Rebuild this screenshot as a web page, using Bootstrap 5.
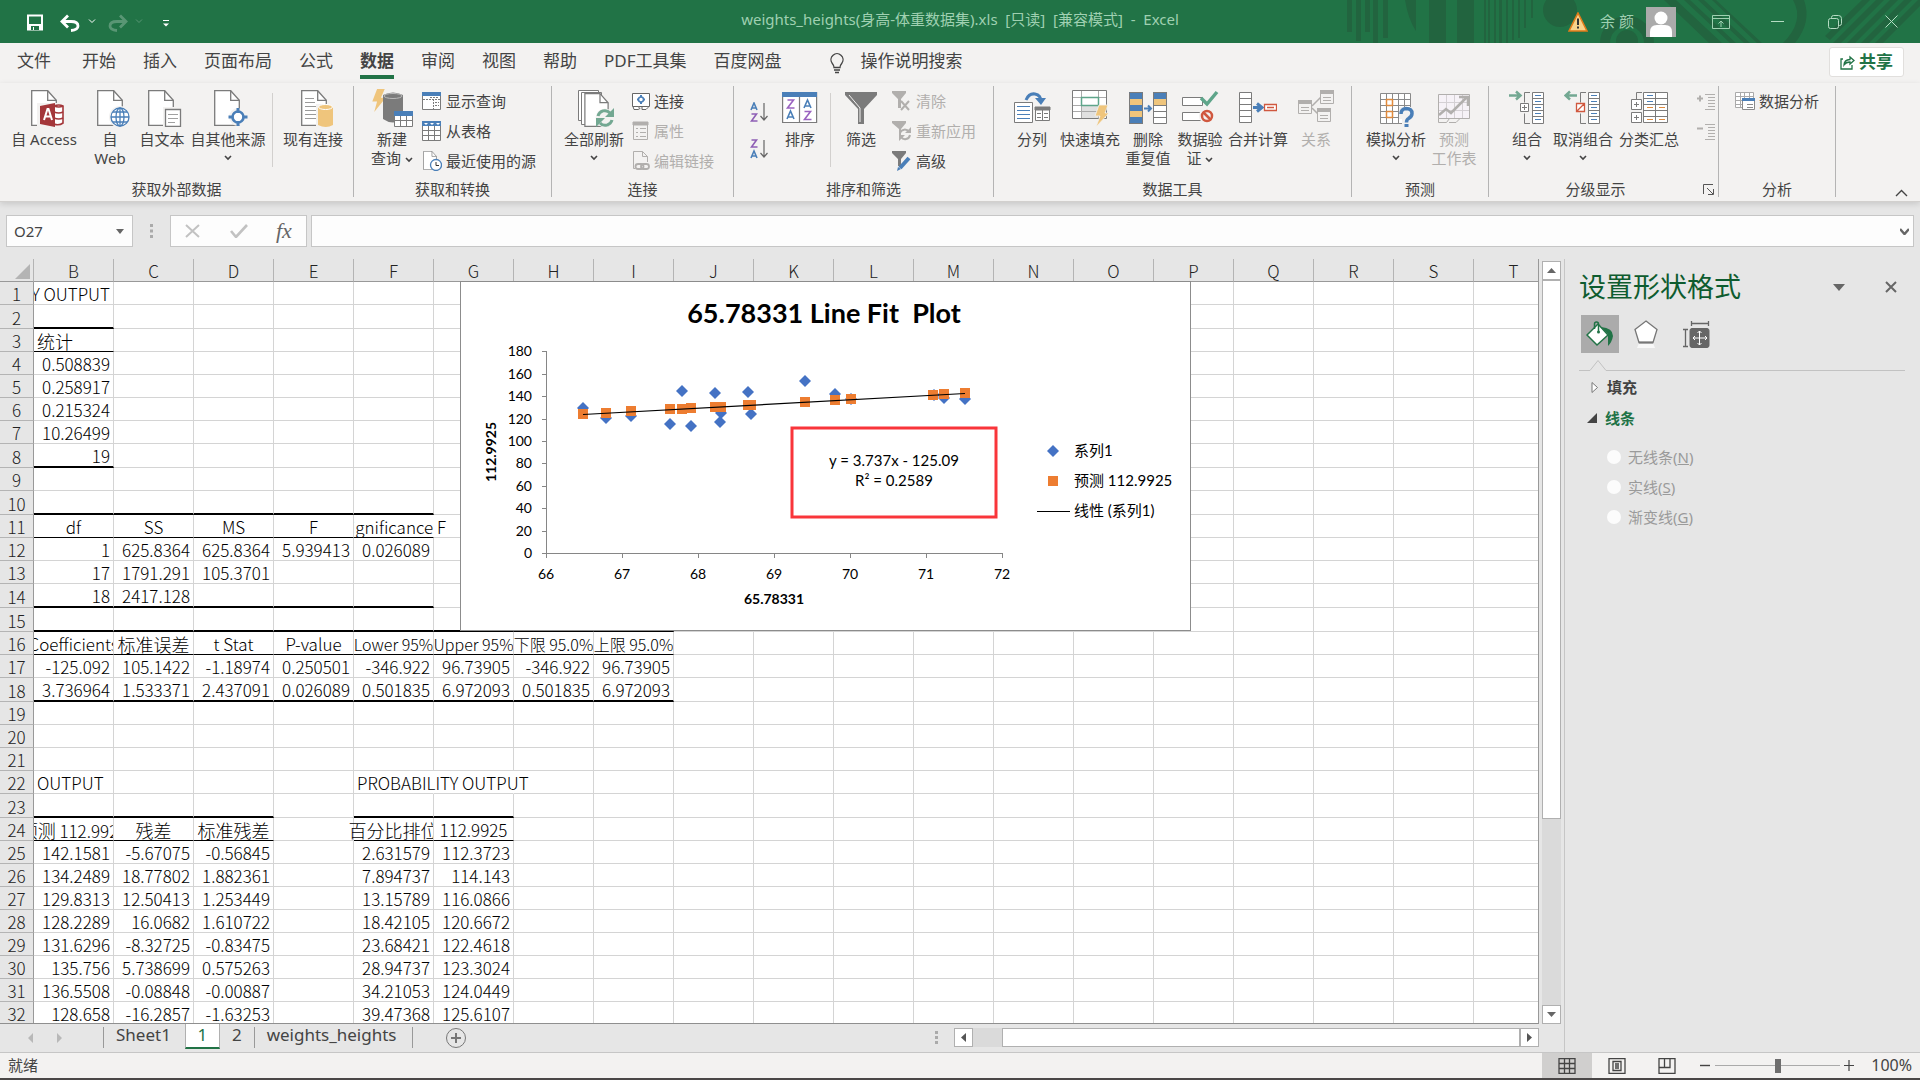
<!DOCTYPE html>
<html lang="zh-CN">
<head>
<meta charset="utf-8">
<meta name="viewport" content="width=device-width, initial-scale=1">
<title>weights_heights - Excel</title>
<link href="https://cdn.jsdelivr.net/npm/bootstrap@5.3.0/dist/css/bootstrap.min.css" rel="stylesheet">
<style>
:root{--xl-green:#217346;--xl-bg:#e6e6e6;--xl-ribbon:#f3f2f1;--xl-line:#b4b4b4;--xl-text:#444}
body{font-family:"Noto Sans","Noto Sans CJK SC",sans-serif;font-size:15px;line-height:19px;color:var(--xl-text);background:var(--xl-bg)}
button{font:inherit;color:inherit;background:none;border:0;padding:0}
svg{display:block;flex:none}
.titlebar,.tabs,.ribbon,.fbar,.status,.stabs,.pane,.vscroll{flex:none}
/* title bar */
.titlebar{height:43px;background:var(--xl-green);color:#9fd0b1;position:relative}
.titlebar .deco{position:absolute;right:0;top:0}
.titlebar .title-side{flex:1 1 0;position:relative}
.titlebar h1{font-size:15px;line-height:19px;font-weight:400;white-space:pre;margin:0;padding-bottom:5px}
.win-btn{width:57px;height:43px;display:flex;align-items:center;justify-content:center}
/* tabs */
.tabs{height:40px;background:var(--xl-ribbon);font-size:17px;line-height:24px}
.tabs a{color:var(--xl-text);text-decoration:none;padding-top:6px;height:36px;border-bottom:4px solid transparent;white-space:nowrap}
.tabs a.on{font-weight:700;border-color:var(--xl-green)}
.tab-list{gap:27px;padding-left:17px}
.share{height:30px;width:75px;background:#fff;border:1px solid #e1dfdd;border-radius:3px;color:var(--xl-green);font-weight:700;font-size:17px;margin:4px 16px 0 0}
/* ribbon */
.ribbon{height:119px;background:var(--xl-ribbon);border-bottom:1px solid #d2d0ce;box-shadow:0 2px 6px #0002;padding-top:3px;position:relative}
.grp{display:flex;flex-direction:column;height:111px;border-right:1px solid var(--xl-line)}
.grp-body{display:flex;flex:1;min-height:0}
.grp-name{text-align:center;line-height:19px;height:19px;margin-bottom:-2px;position:relative}
.g-external{width:354px}.g-transform{width:198px}.g-connect{width:182px}.g-sort{width:260px}
.g-tools{width:358px}.g-forecast{width:137px}.g-outline{width:230px}.g-analysis{width:117px}
.big{display:flex;flex-direction:column;align-items:center;padding-top:3px;white-space:nowrap;height:84px}
.big svg.ico{margin-bottom:3px}
.big .chev{margin-top:6px}
.off{color:#b1afad}
.rows{display:flex;flex-direction:column}
.rows button{height:30px;display:flex;align-items:center;gap:4px;white-space:nowrap}
.split{width:1px;height:74px;background:#d2d0ce;margin-top:7px}
.w52{width:52px}.w60{width:60px}.w64{width:64px}.w80{width:80px}
.launcher{position:absolute;right:4px;top:4px}
/* formula bar */
.fbar{padding:13px 6px 0;height:57px}
.fbox{height:32px;background:#fdfdfd;border:1px solid #c6c6c6}
.fbox input{border:0;background:none;outline:0;width:100%;padding:0 7px;color:#444}
.name-box{width:127px}.fx-box{width:137px}
.fx{font:italic 22px/28px "Liberation Serif",serif;color:#666}
/* grid */
.sheet{flex:1;min-width:0;overflow:hidden;position:relative;border-right:1px solid #999;border-bottom:1px solid #8f8f8f}
.cells{table-layout:fixed;width:1554px;border-collapse:separate;border-spacing:0;font-family:"Noto Sans CJK SC",sans-serif;font-size:17px;font-weight:300;color:#000;line-height:20px;background:#fff}
.cells th,.cells td{padding:0;border:0 solid #d4d4d4;border-width:0 1px 1px 0;height:23px}
.cells .tall th,.cells .tall td{height:24px}
.cells th{background:var(--xl-bg);font-weight:300;text-align:center;color:#222;border-color:#b4b4b4;padding-top:2px}
.cells thead th{border-bottom-color:#999}
.cells tbody th{border-right-color:#999}
.cells div{height:22px;padding:2px 3px 0;white-space:nowrap;overflow-x:clip;overflow-y:visible;display:flex;justify-content:flex-end}
.cells .c{justify-content:center;padding:2px 0 0}
.cells .l{justify-content:flex-start}
.cells .zh{font-size:18px}
.cells .narrow,.cells .narrow .zh{font-size:16px}
.cells .spill{overflow:visible;position:relative}
.cells .cut-left{clip-path:inset(0 -60px 0 0)}
.cells .cut-right{clip-path:inset(0 0 0 -8px)}
.cells .nr{border-right-color:transparent}
.cells .thick{border-bottom:2px solid #000}
.cells .thin{border-bottom:1px solid #000}
.cells .corner{width:15px;height:15px;background:#b4b4b4;clip-path:polygon(100% 0,100% 100%,0 100%);margin:1px 3px 0 auto}
.plot{position:absolute;left:460px;top:22px;background:#fff}
.plot text{font-family:Lato,"Noto Sans CJK SC",sans-serif;font-size:14px;fill:#000}
.plot .lg{font-size:15px}
.plot .ttl{font-size:27px;white-space:pre}
/* scroll bars */
.sbtn{width:19px;height:19px;background:#fff;border:1px solid #b0b0b0;display:flex;align-items:center;justify-content:center;flex:none}
.vscroll{width:19px;margin:2px 3px 0 3px;background:#dadada}
.vthumb{height:539px;background:#fff;border:1px solid #b0b0b0}
.hscroll{width:585px;height:19px;background:#dadada;margin-right:25px}
.hthumb{flex:1;margin-left:29px;background:#fff;border:1px solid #b0b0b0}
/* sheet tabs */
.stabs{height:28px;font-size:17px;line-height:22px}
.stabs a{color:#444;text-decoration:none;height:25px}
.stabs a.on{background:#fff;color:var(--xl-green);border:1px solid #b0b0b0;border-top:0;border-bottom:2px solid var(--xl-green);width:35px;text-align:center;margin-left:2px}
.vbar{width:1px;height:21px;background:#999;margin-top:3px}
/* pane */
.pane{width:356px;border-left:1px solid #c6c6c6;padding:4px 15px 0 14px}
.pane h2{font-size:27px;line-height:40px;font-weight:400;color:#0e5c2f;margin:0}
.pane-tabs{padding:0 0 4px 2px}
.pane-tab{width:38px;height:38px;display:flex;align-items:center;justify-content:center}
.pane-tab.on{background:#ababab}
.pane label{color:#9a9a9a}
.pane input{appearance:none;width:14px;height:14px;border-radius:50%;background:#fcfcfc;margin:0 7px 0 0}
.opt{display:flex;align-items:center;height:30px}
.open-head{color:var(--xl-green);height:32px}
/* status */
.status{height:28px;background:var(--xl-ribbon);border-top:1px solid #c6c6c6;border-bottom:2px solid #4a4747}
.view{width:50px;height:25px;display:flex;align-items:center;justify-content:center}
.view.on{background:#d0cfce}
.zoomer{appearance:none;width:125px;height:16px;background:linear-gradient(#aaa,#aaa) center/100% 1px no-repeat}
.zoomer::-webkit-slider-thumb{appearance:none;width:6px;height:14px;background:#6e6e6e}
.pct{font-size:16px}
</style>
<script src="https://cdn.jsdelivr.net/npm/bootstrap@5.3.0/dist/js/bootstrap.bundle.min.js"></script>
</head>
<body class="vh-100 d-flex flex-column overflow-hidden">
<svg width="0" height="0" class="position-absolute">
<defs>
<symbol id="chev" viewBox="0 0 8 6"><path d="M1 1l3 3 3-3" fill="none" stroke="#444" stroke-width="1.6"/></symbol>
<symbol id="page" viewBox="0 0 26 36"><path d="M.7.7h16l8.6 9.600v25H.7z" fill="#fff" stroke="#7b7b7b" stroke-width="1.3"/><path d="M16.700.7v9.600h8.600" fill="none" stroke="#7b7b7b" stroke-width="1.3"/></symbol>
<symbol id="bolt" viewBox="0 0 14 24"><path d="M5 0h8L9 9h5L2 24l3-11H0z" fill="#efc57c"/></symbol>
</defs></svg>

<header class="titlebar d-flex align-items-center">
  <svg class="deco" width="580" height="43" viewBox="1340 0 580 43" fill="#22643f">
    <path d="M1347 0h5v32h-5zM1356 0h5v41h-5zM1365 0h5v32h-5zM1373 0h5v43h-5zM1383 0h5v38h-5zM1405 0h11v31q-8-12-11-31zM1429 0h17v43h-17zM1457 0h17v43h-17zM1484 0h2v43h-2zM1488 0h2v43h-2zM1494 0h2v43h-2zM1499 0h3v43h-3zM1506 0h2v43h-2zM1512 0h2v40h-2zM1518 0h2v38h-2zM1524 0h2v28h-2zM1531 0h2v18h-2z"/>
    <circle cx="1560" cy="10" r="17"/><circle cx="1627" cy="43" r="22" fill="none" stroke="#22643f" stroke-width="10"/><circle cx="1627" cy="41" r="11"/>
    <path d="M1664 0h12l46 43h-13zM1684 0h6l46 43h-6zM1698 0h6l46 43h-6zM1712 0h4l46 43h-5z"/>
    <path d="M1804 0q8 22-9 43h-12q22-22 10-43z"/>
    <path d="M1862 0h8l-40 40-5-4zM1876 0h8l-43 43h-8zM1890 0h8l-43 43h-8zM1904 0h8l-43 43h-8zM1918 0h2v6l-37 37h-8z"/>
  </svg>
  <div class="title-side d-flex align-items-center">
    <svg width="200" height="43" viewBox="0 0 200 43" fill="none" stroke="#fff">
      <path d="M28 15.500h14v14H28z" stroke-width="2"/><path d="M28 24h14v6H28z" fill="#fff" stroke="none"/><path d="M31 26h8v4h-5v-3h-1v3h-2z" fill="#217346" stroke="none"/>
      <path d="M68 15.500l-6 6 6 6M63 21.500h8q7 0 7 4.500 0 4-7 4.500" stroke-width="2.800"/><path d="M89 19.500l3 3 3-3"/>
      <g opacity=".25"><path d="M120 15.500l6 6-6 6M125 21.500h-8q-7 0-7 4.500 0 4 7 4.500" stroke-width="2.800"/><path d="M136 19.500l3 3 3-3"/></g>
      <path d="M163 20.500h6"/><path d="M163 23.500h6l-3 3z" fill="#fff" stroke="none"/>
    </svg>
  </div>
  <h1>weights_heights(身高-体重数据集).xls  [只读]  [兼容模式]  -  Excel</h1>
  <div class="title-side d-flex align-items-center justify-content-end">
    <svg width="20" height="20" viewBox="0 0 20 20"><path d="M10 1l9 18H1z" fill="#f8d28a" stroke="#e07b1a" stroke-width="1.600"/><path d="M9 6.500h2v6.500H9zM9 14.500h2v2H9z" fill="#333"/></svg>
    <span class="ms-2 ps-1 me-2 pe-1">余 颜</span>
    <svg width="30" height="30" viewBox="0 0 30 30"><path fill="#ababab" d="M0 0h30v30H0z"/><circle cx="15" cy="11" r="6.500" fill="#fff"/><path d="M4 30v-5q0-7 7-7h8q7 0 7 7v5z" fill="#fff"/></svg>
    <button class="win-btn ms-3" aria-label="功能区显示选项"><svg width="18" height="14" fill="none" stroke="#9fd0b1"><path d="M.5.5h17v13H.5zM.5 3.500h17M9 12V6M6.500 8.500L9 6l2.500 2.500"/></svg></button>
    <button class="win-btn" aria-label="最小化"><svg width="13" height="13"><path d="M0 6.500h13" stroke="#b5dcc3"/></svg></button>
    <button class="win-btn" aria-label="还原"><svg width="14" height="14" fill="none" stroke="#b5dcc3"><rect x=".5" y="3.500" width="10" height="10" rx="2"/><path d="M3.500 3.500V2.500q0-2 2-2h5q3 0 3 3v5q0 2-2 2h-1"/></svg></button>
    <button class="win-btn" aria-label="关闭"><svg width="13" height="13"><path d="M.5.5l12 12m0-12l-12 12" stroke="#b5dcc3"/></svg></button>
  </div>
</header>

<nav class="tabs d-flex">
  <div class="tab-list d-flex flex-grow-1">
    <a href="#" class="me-1">文件</a><a href="#">开始</a><a href="#">插入</a><a href="#">页面布局</a><a href="#">公式</a><a href="#" class="on">数据</a><a href="#">审阅</a><a href="#">视图</a><a href="#">帮助</a><a href="#">PDF工具集</a><a href="#">百度网盘</a>
    <a href="#" class="d-flex gap-3 ms-3 ps-1"><svg width="16" height="21" viewBox="0 0 16 21" fill="none" stroke="#444" stroke-width="1.300" class="mt-1"><path d="M5 14.500q0-2-2-4.500a6 6 0 1 1 10 0q-2 2.500-2 4.500zM5 17h6M6 19.500h4"/></svg>操作说明搜索</a>
  </div>
  <button class="share d-flex align-items-center justify-content-center gap-1"><svg width="15" height="15" viewBox="0 0 15 15" fill="none" stroke="#217346" stroke-width="1.300"><path d="M3 4H1v10h11v-4M4 10q0-5 6-5.500V2l4 3.500L10 9V7q-4 0-6 3z"/></svg>共享</button>
</nav>

<section class="ribbon d-flex">
  <div class="grp g-external"><div class="grp-body ps-1">
    <button class="big w80"><svg class="ico" width="40" height="38" viewBox="0 0 40 38"><use href="#page" x="7" y="1" width="26" height="36"/><path fill="#f3f2f1" d="M13 14h27v24H13z"/><path d="M30 17q5-2 9 0v17q-4 3-9 1z" fill="#fff" stroke="#a4373a" stroke-width="1.600"/><path d="M30 23q5 2 9 0M30 29q5 2 9 0M30 17q5 2 9 0" fill="none" stroke="#a4373a" stroke-width="1.600"/><path d="M16 17l15-3v24l-15-3z" fill="#a4373a"/><path d="M20 31l3.500-11h1L28 31M21.500 27.500h5" fill="none" stroke="#fff" stroke-width="2"/></svg>自 Access</button>
    <button class="big w52"><svg class="ico" width="40" height="38" viewBox="0 0 40 38"><use href="#page" x="7" y="1" width="26" height="36"/><circle cx="30" cy="28" r="11" fill="#f3f2f1"/><g fill="none" stroke="#4a7fb8" stroke-width="1.300"><circle cx="30" cy="28" r="9" fill="#fff"/><ellipse cx="30" cy="28" rx="4" ry="9"/><path d="M30 19v18M21 28h18M23 23h14M23 33h14"/></g></svg>自<br>Web</button>
    <button class="big w52"><svg class="ico" width="40" height="38" viewBox="0 0 40 38"><use href="#page" x="6" y="1" width="26" height="36"/><path fill="#f3f2f1" d="M21 18h18v20H21z"/><path fill="#fff" stroke="#7b7b7b" stroke-width="1.300" d="M23.500 20.500h15v17h-15z"/><path stroke="#a0a0a0" d="M26 25.500h10M26 29.500h10M26 33.500h7"/></svg>自文本</button>
    <button class="big w80"><svg class="ico" width="40" height="38" viewBox="0 0 40 38"><use href="#page" x="6" y="1" width="26" height="36"/><circle cx="30" cy="28" r="9" fill="#f3f2f1"/><circle cx="30" cy="28" r="5.500" fill="#fff" stroke="#4a7fb8" stroke-width="2.600"/><path stroke="#4a7fb8" stroke-width="3" d="M30 19v5M30 32v5M20.500 28h5M34.500 28h5"/></svg>自其他来源<svg class="chev" width="8" height="6"><use href="#chev"/></svg></button>
    <div class="split ms-1"></div>
    <button class="big w80"><svg class="ico" width="40" height="38" viewBox="0 0 40 38"><use href="#page" x="8" y="1" width="26" height="36"/><path stroke="#9a9a9a" d="M12 9.500h9M12 13.500h10M12 17.500h16M12 21.500h12M12 25.500h12M12 29.500h12"/><path fill="#f3f2f1" d="M23 15h17v23H23z"/><path fill="#efc57c" d="M25 18q7-4 15 0v18q-7 4-15 0z"/><ellipse cx="32.500" cy="18" rx="7" ry="2.500" fill="#efc57c" stroke="#fff"/></svg>现有连接</button>
  </div><div class="grp-name">获取外部数据</div></div>

  <div class="grp g-transform"><div class="grp-body ps-2">
    <button class="big w60"><svg class="ico" width="42" height="38" viewBox="0 0 42 38"><use href="#bolt" x="1" y="0" width="14" height="23"/><path d="M12 6q10-5 20 0v24q-10 7-20 0z" fill="#7b7b7b"/><ellipse cx="22" cy="7" rx="9" ry="2.500" fill="none" stroke="#bbb"/><path fill="#fff" stroke="#7b7b7b" d="M23.500 23.500h18v14h-18z"/><path fill="#4a7fb8" d="M23 22h19v5H23z"/><path stroke="#7b7b7b" d="M24 31.500h18M29.500 27v10M35.500 27v10"/></svg>新建<span>查询 <svg class="d-inline-block" width="8" height="6"><use href="#chev"/></svg></span></button>
    <div class="rows">
      <button><svg width="20" height="20" fill="none" stroke="#7b7b7b"><path fill="#fff" d="M.5 1.500h18v17H.5z"/><path fill="#4a7fb8" stroke="none" d="M0 1h19v4H0z"/><path d="M1 8.500h17M11.500 8v10M13 11.500h4M13 14.500h4M8 6.500h9" stroke-dasharray="2 1"/></svg>显示查询</button>
      <button><svg width="20" height="20" fill="none" stroke="#7b7b7b"><path fill="#fff" d="M.5 1.500h18v18H.5z"/><path fill="#4a7fb8" stroke="none" d="M0 0h19v5H0z"/><path fill="#fff" stroke="none" d="M2 2h4L4 4zM8 2h4l-2 2zM14 2h4l-2 2z"/><path d="M1 9.500h17M1 14.500h17M6.500 5v14M12.500 5v14"/></svg>从表格</button>
      <button><svg width="20" height="20" viewBox="0 0 20 20"><use href="#page" x="1" y="0" width="14" height="19"/><circle cx="14" cy="14" r="5.500" fill="#fff" stroke="#4a7fb8" stroke-width="1.300"/><path d="M14 11v3.500h3" fill="none" stroke="#333"/></svg>最近使用的源</button>
    </div>
  </div><div class="grp-name">获取和转换</div></div>

  <div class="grp g-connect"><div class="grp-body ps-2 ms-1">
    <button class="big w60 me-2"><svg class="ico" width="40" height="38" viewBox="0 0 40 38"><g fill="#fff" stroke="#7b7b7b"><path d="M4.500 1.500h20v30h-20z"/><path d="M7.500 3.500h20v32h-20z"/></g><use href="#page" x="10" y="4" width="25" height="34"/><circle cx="31" cy="29" r="9.500" fill="#f3f2f1"/><path d="M24 27a7 7 0 0 1 12-3M38 31a7 7 0 0 1-12 3" fill="none" stroke="#73a892" stroke-width="3"/><path d="M40 19v9h-9zM22 38v-9h9z" fill="#73a892"/></svg>全部刷新<svg class="chev" width="8" height="6"><use href="#chev"/></svg></button>
    <div class="rows">
      <button><svg width="18" height="20" fill="#fff" stroke="#666"><path d="M.5 2.500h17v13H.5z"/><path d="M9 4v2m0 4v3M5 8.500h2m4 0h2" stroke="#4a7fb8" stroke-width="2"/><circle cx="9" cy="8.500" r="2.500" stroke="#4a7fb8" stroke-width="1.500"/><path d="M1 15.500h5l2 2-2 1H2zM10 15.500h5l1 1-2 2h-4z"/></svg>连接</button>
      <button class="off"><svg width="18" height="20" fill="none" stroke="#b1afad"><path d="M1.500 1.500h14v17h-14z"/><path fill="#b1afad" d="M1 1h15v3H1z"/><path d="M4 7.500h2m2 0h6M4 11.500h2m2 0h6M4 15.500h2m2 0h6"/></svg>属性</button>
      <button class="off"><svg width="18" height="20" fill="none" stroke="#b1afad"><path d="M3 17.500H1.500V.500h9l5 5V11M10.500.500v5h5"/><rect x="3.500" y="13" width="8" height="5" rx="2.500" stroke-width="1.800"/><rect x="9" y="13" width="8" height="5" rx="2.500" stroke-width="1.800"/></svg>编辑链接</button>
    </div>
  </div><div class="grp-name">连接</div></div>

  <div class="grp g-sort"><div class="grp-body ps-3">
    <div class="d-flex flex-column gap-3 pt-3 me-1">
      <button aria-label="升序"><svg width="20" height="21" fill="none" stroke-width="1.600"><path d="M1 8l3-7 3 7M2 6h4" stroke="#4a7fb8"/><path d="M1.500 12h5l-5 7h6" stroke="#8e5fb5"/><path d="M14 1v17m-3.500-4l3.500 4 3.500-4" stroke="#666" stroke-width="1.200"/></svg></button>
      <button aria-label="降序"><svg width="20" height="21" fill="none" stroke-width="1.600"><path d="M1 19l3-7 3 7M2 17h4" stroke="#4a7fb8"/><path d="M1.500 1h5l-5 7h6" stroke="#8e5fb5"/><path d="M14 1v17m-3.500-4l3.500 4 3.500-4" stroke="#666" stroke-width="1.200"/></svg></button>
    </div>
    <button class="big w52"><svg class="ico" width="36" height="38" fill="none" stroke-width="1.600"><path fill="#fff" stroke="#7b7b7b" stroke-width="1.200" d="M.6 3.500h34v30H.6zM17.500 8v26"/><path fill="#4a7fb8" d="M0 3h35v5H0z"/><path d="M5.500 11h6l-6 8h7M22.500 22.500h6l-6 8h7" stroke="#9a63c0"/><path d="M5 30l3.500-8 3.500 8M6 28h5M22 19l3.500-8 3.500 8M23 17h5" stroke="#4a7fb8"/></svg>排序</button>
    <div class="split ms-1"></div>
    <button class="big w60"><svg class="ico" width="34" height="38"><path fill="#7b7b7b" d="M1 3h32v3L20 20v15h-6V20L1 6z"/><path d="M5 6l11 13v14" stroke="#f3f2f1" fill="none"/></svg>筛选</button>
    <div class="rows">
      <button class="off"><svg width="21" height="20"><path fill="#b1afad" d="M1 0h14v2L10 8v9H7V8L1 2z"/><path d="M10 10l8 9m0-9l-8 9" stroke="#b1afad" stroke-width="2"/></svg>清除</button>
      <button class="off"><svg width="21" height="20"><path fill="#b1afad" d="M1 0h14v2L10 8v6H8V8L1 2z"/><path d="M9 12a5 5 0 0 1 9-1M19 14a5 5 0 0 1-9 2" fill="none" stroke="#b1afad" stroke-width="2"/><path d="M20 6v6h-6zM8 20v-6h6z" fill="#b1afad"/></svg>重新应用</button>
      <button><svg width="21" height="20"><path fill="#7b7b7b" d="M1 0h14v2L10 8v7H7V8L1 2z"/><path d="M18 7L9 17" stroke="#4a7fb8" stroke-width="4"/><path d="M6 20l1-4 3 2z" fill="#4a7fb8"/></svg>高级</button>
    </div>
  </div><div class="grp-name">排序和筛选</div></div>

  <div class="grp g-tools"><div class="grp-body ps-2">
    <button class="big w52 ms-1"><svg class="ico" width="38" height="38" fill="#fff" stroke="#7b7b7b"><path d="M1.500 13.500h18v20h-18zM22.500 18.500h14v13h-14z"/><path d="M22 18h15v3H22z" fill="#7b7b7b"/><path d="M24 24.500h4m3 0h4M24 28.500h4m3 0h4M29.500 21v10" /><path d="M4 17.500h13M4 21.500h13M4 25.500h13M4 29.500h13" stroke="#4a7fb8" stroke-width="1.200"/><path d="M13 11q3-7 9-6 6 1 6 8" fill="none" stroke="#4a7fb8" stroke-width="3"/><path d="M22 9h11l-5 7z" fill="#4a7fb8" stroke="none"/></svg>分列</button>
    <button class="big w64"><svg class="ico" width="38" height="38" fill="#fff" stroke="#7b7b7b"><path d="M1.500 1.500h34v28h-34z"/><path fill="#e0e0e0" stroke="none" d="M11 17h17v12H11z"/><path d="M2 8.500h33M2 16.500h33M2 22.500h33M10.500 2v27M27.500 2v27" stroke="#aaa"/><path d="M10.500 8.500h17v8h-17z" stroke="#5ea58a" stroke-width="1.500"/><path d="M28 16h9l-3 8h4L25 38l4-11h-5z" fill="#efc57c" stroke="#f3f2f1" stroke-width=".8"/></svg>快速填充</button>
    <button class="big w52"><svg class="ico" width="40" height="38" fill="none"><path fill="#4a7fb8" d="M1 3h14v32H1zM25 3h14v7H25z"/><path fill="#efc57c" d="M1 10h14v6H1zM1 22h14v6H1zM25 10h14v6H25z"/><path fill="#fff" d="M25 16h14v19H25z"/><path stroke="#7b7b7b" d="M1.500 3.500h13v31h-13zM25.500 3.500h13v31h-13zM25 22.500h14M25 28.500h14M25 16.500h14"/><path d="M16 19.500h6m-2-3l3 3-3 3" stroke="#4a7fb8" stroke-width="2"/></svg>删除<br>重复值</button>
    <button class="big w52"><svg class="ico" width="38" height="38" fill="#fff" stroke="#7b7b7b"><path d="M1.500 8.500h20v8h-20zM1.500 23.500h20v8h-20z"/><circle cx="26" cy="27" r="8" fill="#f3f2f1" stroke="none"/><path d="M20 9l6 6L36 3" stroke="#5ea58a" stroke-width="3.500" fill="none"/><circle cx="26" cy="27" r="5" stroke="#d0583f" stroke-width="2.500" fill="none"/><path d="M22 23l8 8" stroke="#d0583f" stroke-width="2.500"/></svg>数据验<span>证 <svg class="d-inline-block" width="8" height="6"><use href="#chev"/></svg></span></button>
    <button class="big w64"><svg class="ico" width="38" height="38" fill="#fff" stroke="#7b7b7b"><path d="M.5 3.500h12v30H.5zM0 9.500h12M0 15.500h12M0 21.500h12M0 27.500h12"/><path d="M14 18.500h7m-3-4l5 4-5 4" stroke="#4a7fb8" stroke-width="3" fill="none"/><path d="M25.500 15.500h12v6h-12zM28 18.500h7" stroke="#d0583f" stroke-width="1.300"/></svg>合并计算</button>
    <button class="big w52 off"><svg class="ico" width="38" height="38" fill="#f3f2f1" stroke="#b1afad"><path d="M15 17l9-9M15 19l6 6" stroke-width="1.500"/><path d="M1.500 12.500h13v12h-13zM23.500 2.500h13v12h-13zM20.500 20.500h13v12h-13z"/><path fill="#b1afad" d="M1 11h14v4H1zM23 1h14v4H23zM20 19h14v4H20z" stroke="none"/><path d="M4 18.500h8M4 21.500h8M26 8.500h8M26 11.500h8M23 26.500h8M23 29.500h8"/></svg>关系</button>
  </div><div class="grp-name">数据工具</div></div>

  <div class="grp g-forecast"><div class="grp-body ps-2 ms-1">
    <button class="big w64"><svg class="ico" width="36" height="38" fill="#fff" stroke="#8a8a8a"><path d="M2.500 4.500h30v30h-30zM2 10.500h30M2 16.500h30M2 22.500h30M2 28.500h30M8.500 4v30M14.500 4v30M20.500 4v30M26.500 4v30"/><path d="M8.500 10.500h6v6h-6zM8.500 22.500h6v6h-6z" stroke="#e08a3c" stroke-width="1.500"/><path d="M21 18h15v20H24v-8h-3z" fill="#f3f2f1" stroke="none"/><path d="M23 25q0-5 5-5.500 6 0 6 5 0 3-3.500 5-2 1-2 4" fill="none" stroke="#4a7fb8" stroke-width="3.500"/><path d="M26.500 35h4v3h-4z" fill="#4a7fb8" stroke="none"/></svg>模拟分析<svg class="chev" width="8" height="6"><use href="#chev"/></svg></button>
    <button class="big w52 off"><svg class="ico" width="36" height="38" fill="none" stroke="#b1afad"><path fill="#f6f2f7" d="M2.500 5.500h31v24h-31z"/><path d="M10.500 6v23M18.500 6v23M26.500 6v23M3 13.500h30M3 21.500h30" stroke="#d4d0d4"/><path d="M3 26l7-6 5 4L31 8m-8 0h9v9" stroke-width="2.500"/><path d="M2.500 29.500v4h8l3-4M13 33.500h7l4-4"/></svg>预测<br>工作表</button>
  </div><div class="grp-name">预测</div></div>

  <div class="grp g-outline"><div class="grp-body ps-2">
    <button class="big w60"><svg class="ico" width="38" height="38" fill="#fff" stroke="#7b7b7b"><path d="M1 6.500h11m-4-4l4.500 4-4.500 4" stroke="#73a892" stroke-width="2.500" fill="none"/><path d="M22 3.500h-5.500v10M22 34.500h-5.500v-10" fill="none"/><path d="M12.500 14.500h8v8h-8zM14 18.500h5m-2.500-2.500v5"/><path d="M24.500 3.500h11v31h-11zM24 9.500h11M24 15.500h11M24 21.500h11M24 27.500h11"/><path d="M27 6.500h6M27 12.500h6M27 18.500h6M27 24.500h6M27 30.500h6" stroke="#4a7fb8" stroke-width="1.200"/></svg>组合<svg class="chev" width="8" height="6"><use href="#chev"/></svg></button>
    <button class="big w52"><svg class="ico" width="38" height="38" fill="#fff" stroke="#7b7b7b"><path d="M13 6.500H2m4-4l-4.500 4 4.500 4" stroke="#73a892" stroke-width="2.500" fill="none"/><path d="M22 3.500h-5.500v10M22 34.500h-5.500v-10" fill="none"/><path d="M12.500 14.500h8v8h-8zM13 22l7-7" stroke="#d0583f" stroke-width="1.300"/><path d="M24.500 3.500h11v31h-11zM24 9.500h11M24 15.500h11M24 21.500h11M24 27.500h11"/><path d="M27 6.500h6M27 12.500h6M27 18.500h6M27 24.500h6M27 30.500h6" stroke="#4a7fb8" stroke-width="1.200"/></svg>取消组合<svg class="chev" width="8" height="6"><use href="#chev"/></svg></button>
    <button class="big w80"><svg class="ico" width="38" height="38" fill="#fff" stroke="#7b7b7b"><path d="M12 3.500H6.500v7" fill="none"/><path d="M1.500 10.500h10v10h-10zM1.500 23.500h10v10h-10zM4 15.500h5M6.500 13v5M4 28.500h5M6.500 26v5"/><path d="M13.500 3.500h24v30h-24zM25.500 3v31M13 9.500h24M13 15.500h24M13 21.500h24M13 27.500h24"/><path d="M17 6.500h6M17 12.500h6" stroke="#4a7fb8"/><path d="M17 18.500h6m6 0h6M17 30.500h6m6 0h6" stroke="#e08a3c"/></svg>分类汇总</button>
    <div class="rows ms-2">
      <button aria-label="显示明细数据"><svg width="18" height="17" stroke="#b1afad"><path d="M0 5.500h6M3 2.500v6" stroke-width="2"/><path d="M8 1.500h10M11 4.500h7M11 7.500h7M11 10.500h7M11 13.500h7M8 16.500h10"/></svg></button>
      <button aria-label="隐藏明细数据"><svg width="18" height="17" stroke="#b1afad"><path d="M0 5.500h6" stroke-width="2"/><path d="M8 1.500h10M11 4.500h7M11 7.500h7M11 10.500h7M11 13.500h7M8 16.500h10"/></svg></button>
    </div>
  </div><div class="grp-name pe-3">分级显示<button class="launcher" aria-label="分级显示设置"><svg width="11" height="11" fill="none" stroke="#555"><path d="M.5 10V.5H10M4 4l6 6M10.500 5v5.500H5"/></svg></button></div></div>

  <div class="grp g-analysis"><div class="grp-body ps-3">
    <div class="rows"><button><svg width="20" height="20" fill="#fff" stroke="#8a8a8a"><path d="M.5 1.500h18v15H.5zM0 5.500h18M0 9.500h18M0 13.500h18M5.500 1v15M9.500 1v15M14.500 1v15" stroke="#aaa"/><path d="M7.500 8.500h12v10h-12z"/><path fill="#4a7fb8" stroke="none" d="M7 7h13v3H7z"/><path d="M12 13.500h6M12 16.500h6"/></svg>数据分析</button></div>
  </div><div class="grp-name">分析</div></div>
  <button class="ms-auto me-2 pe-1 align-self-end pb-1" aria-label="折叠功能区"><svg width="13" height="8"><path d="M1 7l5.500-5.500L12 7" fill="none" stroke="#444" stroke-width="1.400"/></svg></button>
</section>

<section class="fbar d-flex">
  <div class="fbox name-box d-flex align-items-center"><input aria-label="名称框" value="O27"><svg width="8" height="5" class="me-2"><path d="M0 0h8L4 5z" fill="#666"/></svg></div>
  <svg width="37" height="32"><path d="M17 9h3v3h-3zM17 14.500h3v3h-3zM17 20h3v3h-3z" fill="#aaa"/></svg>
  <div class="fbox fx-box d-flex align-items-center justify-content-around me-1">
    <button aria-label="取消"><svg width="16" height="14"><path d="M1 1l13 12M14 1L1 13" stroke="#c2c2c2" stroke-width="2"/></svg></button>
    <button aria-label="输入"><svg width="18" height="14"><path d="M1 7l5 6L17 1" fill="none" stroke="#c2c2c2" stroke-width="2.600"/></svg></button>
    <button class="fx" aria-label="插入函数">fx</button>
  </div>
  <div class="fbox flex-grow-1 d-flex align-items-center"><input aria-label="编辑栏"><svg width="9" height="7" class="me-1"><path d="M0 1l4.500 5L9 1" fill="none" stroke="#666" stroke-width="2.500"/></svg></div>
</section>

<main class="d-flex flex-fill overflow-hidden">
  <div class="d-flex flex-column flex-grow-1 overflow-hidden">
    <div class="d-flex flex-grow-1 overflow-hidden">
      <div class="sheet">
        <table class="cells" id="cells"></table>
        <svg class="plot" id="plot" width="731" height="350" viewBox="0 0 731 350"></svg>
      </div>
      <div class="vscroll d-flex flex-column">
        <button class="sbtn" aria-label="向上滚动"><svg width="9" height="5"><path d="M0 5h9L4.500 0z" fill="#666"/></svg></button>
        <div class="vthumb"></div>
        <button class="sbtn mt-auto" aria-label="向下滚动"><svg width="9" height="5"><path d="M0 0h9L4.500 5z" fill="#666"/></svg></button>
      </div>
    </div>
    <nav class="stabs d-flex">
      <svg width="103" height="28" fill="#b8b8b8"><path d="M33 9v10l-5-5zM57 9v10l5-5z"/></svg>
      <div class="vbar me-2"></div>
      <a href="#" class="px-1 me-2">Sheet1</a><a href="#" class="on">1</a><a href="#" class="ps-2 ms-1 me-2 pe-1">2</a>
      <div class="vbar me-2"></div><a href="#" class="ps-1 me-3">weights_heights</a><div class="vbar"></div>
      <button class="ms-4 ps-2" aria-label="新工作表"><svg width="22" height="22" fill="none" stroke="#777"><circle cx="11" cy="11" r="9.500"/><path d="M6 11h10M11 6v10" stroke-width="2"/></svg></button>
      <svg width="3" height="28" class="ms-auto me-3"><path d="M0 7h3v3H0zM0 12h3v3H0zM0 17h3v3H0z" fill="#aaa"/></svg>
      <div class="hscroll d-flex mt-1">
        <button class="sbtn" aria-label="向左滚动"><svg width="5" height="9"><path d="M5 0v9L0 4.500z" fill="#555"/></svg></button>
        <div class="hthumb"></div>
        <button class="sbtn" aria-label="向右滚动"><svg width="5" height="9"><path d="M0 0v9l5-4.500z" fill="#555"/></svg></button>
      </div>
    </nav>
  </div>

  <aside class="pane">
    <div class="d-flex align-items-center pt-1">
      <h2 class="flex-grow-1">设置形状格式</h2>
      <button aria-label="窗格选项"><svg width="12" height="7"><path d="M0 0h12L6 7z" fill="#666"/></svg></button>
      <button class="ms-4 ps-3 me-2" aria-label="关闭窗格"><svg width="12" height="12"><path d="M1 1l10 10M11 1L1 11" stroke="#666" stroke-width="2"/></svg></button>
    </div>
    <div class="pane-tabs d-flex mt-2 gap-2">
      <button class="pane-tab on" aria-label="填充与线条"><svg width="28" height="26" viewBox="0 0 28 26"><path d="M12 3l10 11-11 10L1 14z" fill="#fff" stroke="#217346" stroke-width="1.500"/><path d="M8.500 8V3q0-2 2-2t2 2v8" fill="none" stroke="#217346" stroke-width="1.500"/><circle cx="12.500" cy="11" r="1.500" fill="#217346"/><path d="M15 6q12 1 12 9-1 6-5 10V13z" fill="#217346"/></svg></button>
      <button class="pane-tab" aria-label="效果"><svg width="26" height="30" viewBox="0 0 26 30"><path d="M6 24h14l2 5H4z" fill="#f8f8f8"/><path d="M13 2l11 8.500-4 13H6l-4-13z" fill="#fff" stroke="#777" stroke-width="1.300"/><path d="M6 23.500h14" stroke="#777" stroke-width="2"/></svg></button>
      <button class="pane-tab ms-1" aria-label="大小与属性"><svg width="28" height="28" viewBox="0 0 28 28" fill="none" stroke="#666"><rect x="8" y="8.500" width="19" height="19" rx="2" fill="#666"/><path d="M9.500 1v5M26.500 1v5M9 3.500h17M1 9.500h5M1 26.500h5M3.500 9v17" stroke-width="1.300"/><path d="M17.500 11v14M11 18h14M15.500 13l2-2 2 2M15.500 23l2 2 2-2M13 16l-2 2 2 2M23 16l2 2-2 2" stroke="#fff"/></svg></button>
    </div>
    <svg class="w-100" height="15"><path d="M0 13.500h11l8-10 8 10h300" fill="none" stroke="#c2c2c2"/></svg>
    <div class="opt fw-bold ps-2"><svg width="8" height="11" class="ms-1 me-2"><path d="M1 .5v10L6.500 5.500z" fill="#fff" stroke="#777"/></svg><span>填充</span></div>
    <div class="opt fw-bold ps-2 open-head"><svg width="10" height="10" class="me-2"><path d="M10 0v10H0z" fill="#444"/></svg><span id="line-head">线条</span></div>
    <div class="ps-4 mt-2" role="radiogroup" aria-labelledby="line-head">
      <div class="opt ps-1"><input type="radio" name="ln" id="ln1" disabled><label for="ln1">无线条(<u>N</u>)</label></div>
      <div class="opt ps-1"><input type="radio" name="ln" id="ln2" disabled><label for="ln2">实线(<u>S</u>)</label></div>
      <div class="opt ps-1"><input type="radio" name="ln" id="ln3" disabled><label for="ln3">渐变线(<u>G</u>)</label></div>
    </div>
  </aside>
</main>

<footer class="status d-flex align-items-center">
  <span class="ps-2 me-auto">就绪</span>
  <button class="view on" aria-label="普通"><svg width="18" height="16" fill="none" stroke="#444" stroke-width="1.300"><path d="M1 .7h16v14.600H1zM1 5.500h16M1 10.500h16M6.500 1v14M11.500 1v14"/></svg></button>
  <button class="view" aria-label="页面布局"><svg width="18" height="16" fill="none" stroke="#444" stroke-width="1.300"><path d="M1 .7h16v14.600H1zM5 3.500h8v9H5zM7 6h4M7 8h4M7 10h4"/></svg></button>
  <button class="view" aria-label="分页预览"><svg width="18" height="16" fill="none" stroke="#444" stroke-width="1.300"><path d="M1 .7h16v14.600H1zM1 9.500h11v-9M6.500 1v8"/></svg></button>
  <button class="ms-2 me-1" aria-label="缩小"><svg width="11" height="11"><path d="M0 5.500h10" stroke="#444" stroke-width="1.400"/></svg></button>
  <input class="zoomer" type="range" aria-label="显示比例" min="0" max="100" value="50">
  <button class="ms-1" aria-label="放大"><svg width="11" height="11"><path d="M0 5.500h10M5 0v11" stroke="#444" stroke-width="1.200"/></svg></button>
  <span class="pct ms-3 pe-2">100%</span>
</footer>

<script>
const cols = 'BCDEFGHIJKLMNOPQRST'.split('');
// numbers are right aligned; c = centred, l = left aligned text
const data = {
 1:{B:'Y OUTPUT'}, 3:{B:['l','统计']}, 4:{B:'0.508839'}, 5:{B:'0.258917'}, 6:{B:'0.215324'}, 7:{B:'10.26499'}, 8:{B:'19'},
 11:{B:['c','df'],C:['c','SS'],D:['c','MS'],E:['c','F'],F:['c spill cut-left','Significance F']},
 12:{B:'1',C:'625.8364',D:'625.8364',E:'5.939413',F:'0.026089'},
 13:{B:'17',C:'1791.291',D:'105.3701'}, 14:{B:'18',C:'2417.128'},
 16:{B:['c','Coefficients'],C:['c','标准误差'],D:['c','t Stat'],E:['c','P-value'],F:['c narrow','Lower 95%'],G:['c narrow','Upper 95%'],H:['c narrow','下限 95.0%'],I:['c narrow','上限 95.0%']},
 17:{B:'-125.092',C:'105.1422',D:'-1.18974',E:'0.250501',F:'-346.922',G:'96.73905',H:'-346.922',I:'96.73905'},
 18:{B:'3.736964',C:'1.533371',D:'2.437091',E:'0.026089',F:'0.501835',G:'6.972093',H:'0.501835',I:'6.972093'},
 22:{B:['l','OUTPUT'],F:['l spill','PROBABILITY OUTPUT']},
 24:{B:['c','预测 112.9925'],C:['c','残差'],D:['c','标准残差'],F:['c spill cut-right','百分比排位'],G:['c','112.9925']}
};
[['142.1581','-5.67075','-0.56845','2.631579','112.3723'],
 ['134.2489','18.77802','1.882361','7.894737','114.143'],
 ['129.8313','12.50413','1.253449','13.15789','116.0866'],
 ['128.2289','16.0682','1.610722','18.42105','120.6672'],
 ['131.6296','-8.32725','-0.83475','23.68421','122.4618'],
 ['135.756','5.738699','0.575263','28.94737','123.3024'],
 ['136.5508','-0.08848','-0.00887','34.21053','124.0449'],
 ['128.658','-16.2857','-1.63253','39.47368','125.6107']
].forEach((r,i)=>data[25+i]={B:r[0],C:r[1],D:r[2],F:r[3],G:r[4]});
const thick = {2:'B',8:'B',10:'BCDEF',14:'BCDEF',15:'BCDEFGHI',18:'BCDEFGHI',23:'BCDFG'};
const thin = {3:'B',11:'BCDEF',16:'BCDEFGHI',24:'BCDFG'};
const noRight = {11:'F',22:'FG'};
const zh = s => s.replace(/ /g,'&nbsp;').replace(/[一-龥]+/g, m=>`<span class="zh">${m}</span>`);
let h = '<colgroup><col style="width:34px">' + cols.map(()=>'<col style="width:80px">').join('') + '</colgroup><thead><tr><th><span class="corner d-block"></span></th>' + cols.map(c=>`<th>${c}</th>`).join('') + '</tr></thead><tbody>';
for (let r=1;r<=32;r++){
  h += `<tr${thick[r]?' class="tall"':''}><th>${r}</th>`;
  for (const c of cols){
    const k = [(thick[r]||'').includes(c)?'thick':'',(thin[r]||'').includes(c)?'thin':'',(noRight[r]||'').includes(c)?'nr':''].filter(Boolean).join(' ');
    const v = (data[r]||{})[c];
    h += `<td${k?` class="${k}"`:''}>` + (v ? (Array.isArray(v) ? `<div class="${v[0]}"><span>${zh(v[1])}</span></div>` : `<div>${v}</div>`) : '') + '</td>';
  }
  h += '</tr>';
}
document.getElementById('cells').innerHTML = h + '</tbody>';

// line fit plot
const blue = [[123,127],[146,137],[171,135],[210,143],[222,110],[231,145],[255,112],[260,141],[261,132],[288,111],[291,133],[345,100],[375,113],[391,118],[474,114],[484,117],[505,118]];
const orange = [[123,133],[146,132],[171,130],[210,128],[222,128],[231,127],[255,126],[261,126],[288,124],[291,124],[345,121],[375,119],[391,118],[473,114],[484,113],[505,112]];
const dia = (x,y)=>`<path d="M${x} ${y-6}l6 6-6 6-6-6z" fill="#4472c4"/>`;
const sq = (x,y)=>`<path d="M${x-5} ${y-5}h10v10h-10z" fill="#ed7d31"/>`;
let p = '<rect x=".5" y=".5" width="730" height="349" fill="none" stroke="#8c8c8c"/><text class="ttl" x="364" y="42" text-anchor="middle" font-weight="700">65.78331 Line Fit  Plot</text>';
p += '<path d="M86.500 70v202.500H542" fill="none" stroke="#868686"/>';
for (let i=0;i<=9;i++){ const y=Math.round(272-i*22.4); p += `<path d="M82 ${y+.5}h5" stroke="#868686"/><text x="72" y="${y+5}" text-anchor="end">${i*20}</text>`; }
for (let i=0;i<=6;i++){ const x=86+i*76; p += `<path d="M${x+.5} 272v5" stroke="#868686"/><text x="${x}" y="298" text-anchor="middle">${66+i}</text>`; }
p += blue.map(a=>dia(...a)).join('') + orange.map(a=>sq(...a)).join('');
p += '<path d="M123 133.500L505 112.500" stroke="#000" stroke-width="1.200"/>';
p += '<rect x="332" y="147" width="204" height="89" fill="none" stroke="#f9353a" stroke-width="3"/>';
p += '<text class="lg" x="434" y="185" text-anchor="middle">y = 3.737x - 125.09</text><text class="lg" x="434" y="205" text-anchor="middle">R² = 0.2589</text>';
p += '<text x="314" y="323" text-anchor="middle" font-weight="700">65.78331</text><text transform="translate(36 171) rotate(-90)" text-anchor="middle" font-weight="700">112.9925</text>';
p += dia(593,170)+sq(593,200)+'<path d="M577 230.500h33" stroke="#000"/><text class="lg" x="614" y="175">系列1</text><text class="lg" x="614" y="205">预测 112.9925</text><text class="lg" x="614" y="235">线性 (系列1)</text>';
document.getElementById('plot').innerHTML = p;
</script>
</body>
</html>
